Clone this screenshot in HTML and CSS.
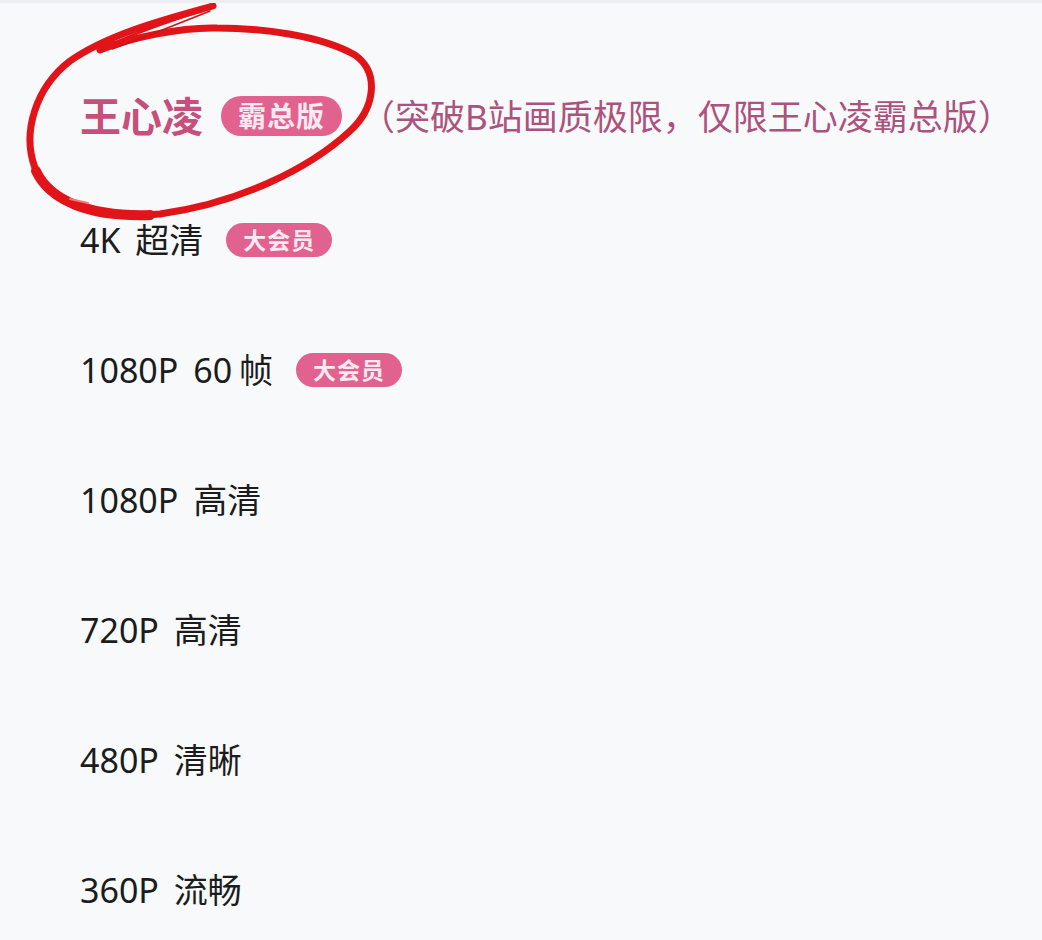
FILE: index.html
```html
<!DOCTYPE html>
<html>
	<head>
		<title>画质选择</title>
		<link rel="stylesheet" href="styles.css">
	</head>
	<body>
		<div class="sheet">
			<div class="handle"></div>
			<ul class="quality-list">
				<li class="quality first">
					<span class="name special">王心凌</span>
					<span class="tag big">霸总版</span>
					<span class="note">（突破B站画质极限，仅限王心凌霸总版）</span>
				</li>
				<li class="quality"><span class="name">4K 超清</span><span class="tag">大会员</span></li>
				<li class="quality"><span class="name">1080P 60<span class="unit">帧</span></span><span class="tag">大会员</span></li>
				<li class="quality"><span class="name">1080P 高清</span></li>
				<li class="quality"><span class="name">720P 高清</span></li>
				<li class="quality"><span class="name">480P 清晰</span></li>
				<li class="quality"><span class="name">360P 流畅</span></li>
			</ul>
			<svg class="scribble" viewBox="0 0 400 230" width="400" height="230">
				<path d="M100 47 C130 35 180 24 217 25 C260 25 320 32 355 52 C380 70 375 105 350 128 C310 165 240 200 160 211 C100 216 50 200 35 165 C22 130 35 85 70 58 C110 30 170 15 213 3" fill="none" stroke="#e1141a" stroke-width="7" stroke-linecap="round"/>
				<path d="M213 4 C170 18 128 32 98 48" fill="none" stroke="#e1141a" stroke-width="2.5" stroke-linecap="round"/>
				<path d="M210 8 C175 22 140 36 112 46" fill="none" stroke="#d01218" stroke-width="1.5" stroke-linecap="round"/>
				<path d="M36 168 C50 198 90 214 150 212" fill="none" stroke="#e1141a" stroke-width="10" stroke-linecap="round"/>
				<path d="M70 196 L88 200" fill="none" stroke="#f07a7a" stroke-width="2" stroke-linecap="round"/>
			</svg>
		</div>
	</body>
</html>
```

FILE: styles.css
```css
body{
	margin: 0;
	background: #f7f9fb;
	font-family: "Noto Sans", "Noto Sans CJK SC", sans-serif;
}
.sheet{
	position: relative;
	height: 940px;
	overflow: hidden;
	border-top: 3px solid #eceef1;
}
.handle{
	position: absolute;
	top: -3px;
	left: 505px;
	width: 40px;
	height: 3px;
	background: #c4c6c9;
}
.quality-list{
	list-style: none;
	margin: 0;
	padding: 54px 0 0 80px;
}
.quality{
	display: flex;
	align-items: center;
	height: 130px;
	line-height: 1;
}
.quality.first{
	height: 118px;
}
.name{
	font-size: 34px;
	color: #1c1c1c;
	word-spacing: 6px;
}
.name .unit{
	margin-left: 7px;
}
.name.special{
	font-size: 41px;
	font-weight: 600;
	color: #c74f7c;
	word-spacing: 0;
}
.tag{
	display: inline-flex;
	align-items: center;
	height: 34px;
	padding: 0 17px;
	margin-left: 23px;
	border-radius: 17px;
	background: #e2628f;
	color: #fde9f1;
	font-size: 23px;
	font-weight: 700;
	letter-spacing: 1px;
}
.tag.big{
	height: 40px;
	padding: 0 17px;
	margin-left: 18px;
	border-radius: 20px;
	font-size: 28px;
}
.note{
	margin-left: 18px;
	font-size: 35px;
	color: #ad527d;
}
.scribble{
	position: absolute;
	top: 0;
	left: 0;
}
```
